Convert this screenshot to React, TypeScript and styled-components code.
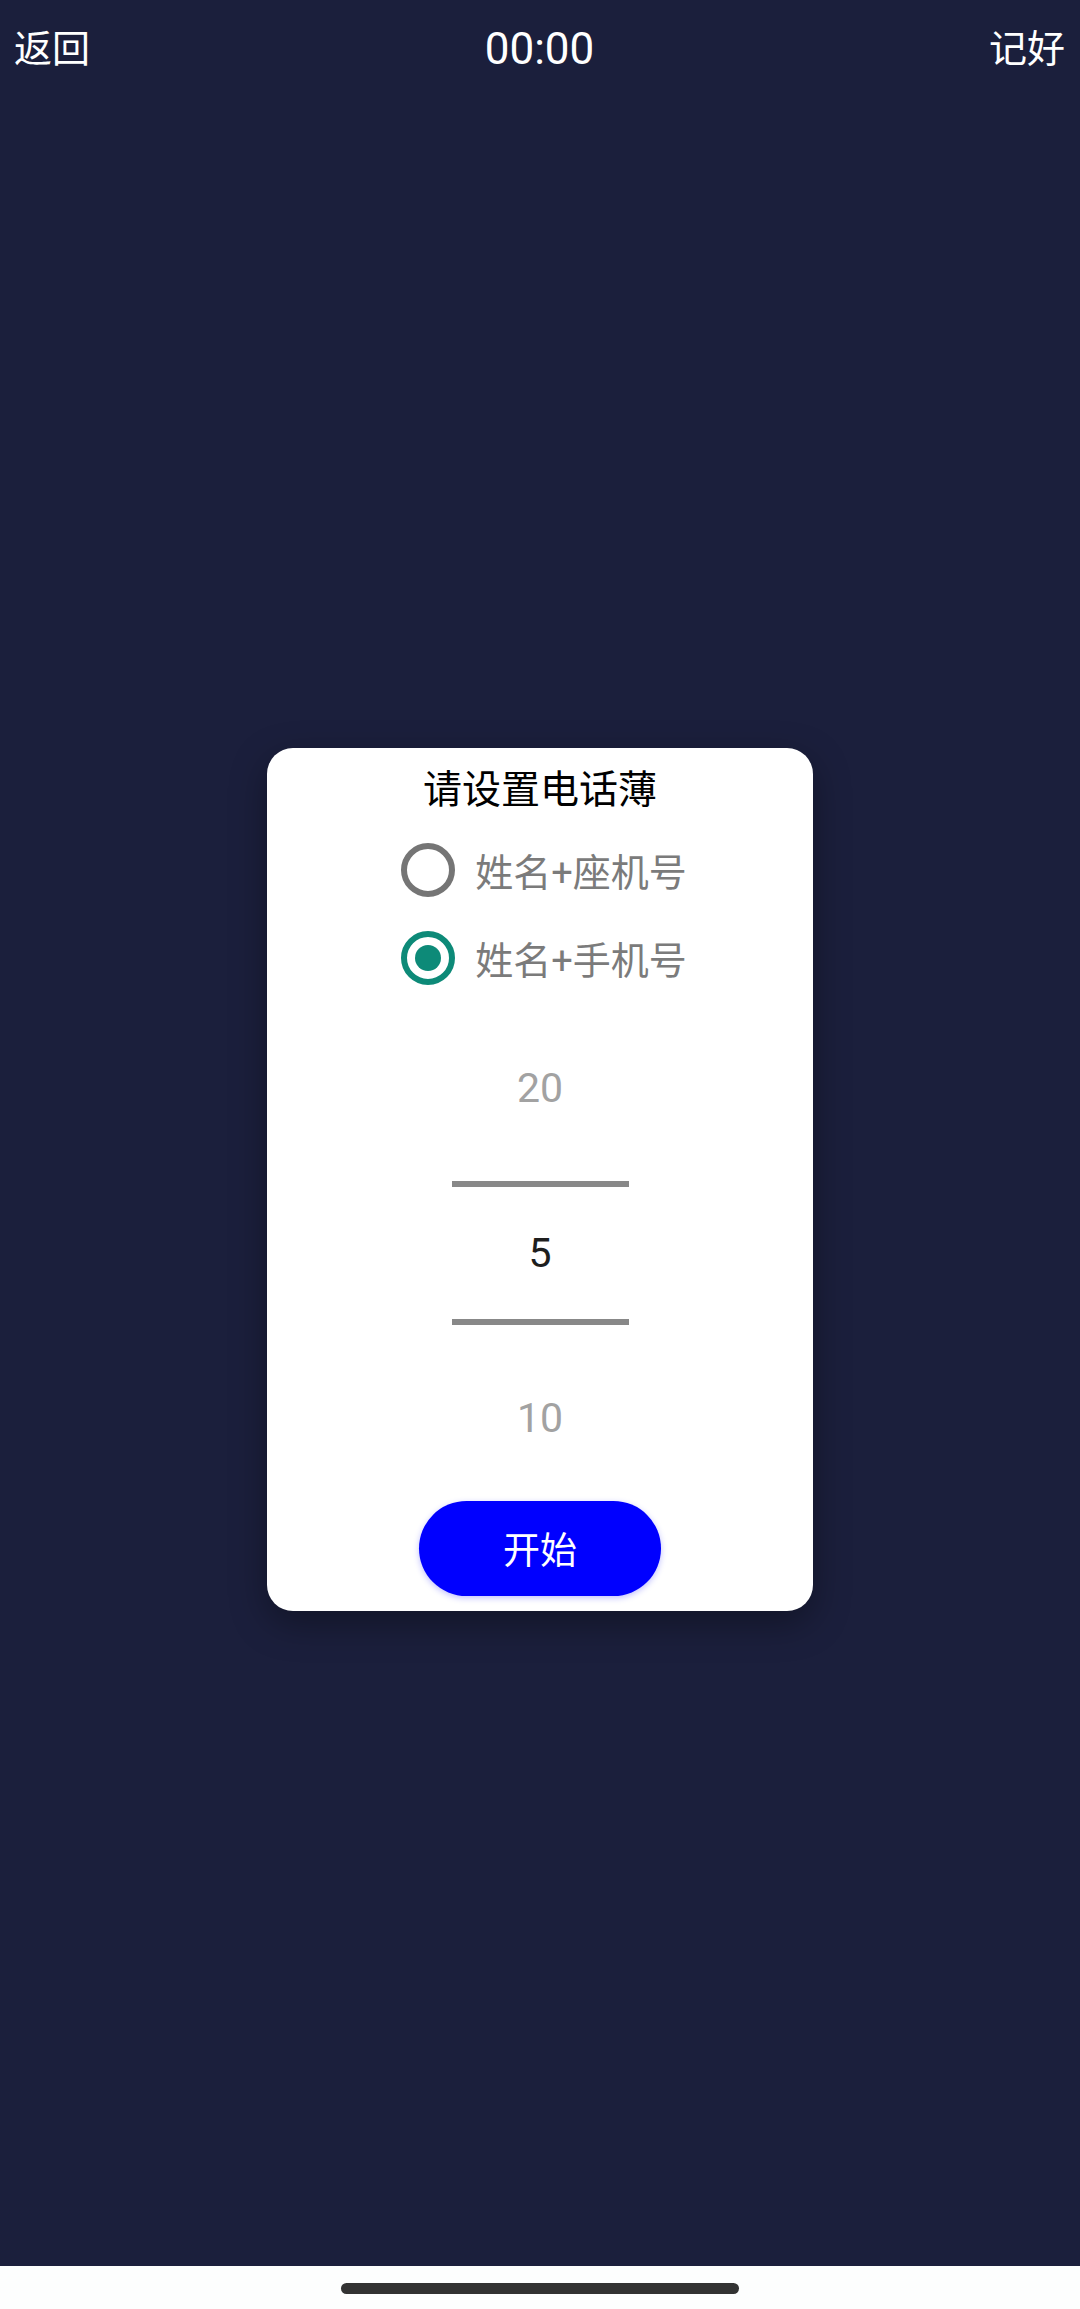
import React, { useState } from "react";
import styled, { createGlobalStyle } from "styled-components";

const GlobalStyle = createGlobalStyle`
  html, body {
    margin: 0;
    padding: 0;
  }
  body {
    font-family: Roboto, "Noto Sans CJK SC", sans-serif;
  }
`;

const Screen = styled.div`
  display: flex;
  flex-direction: column;
  width: 1080px;
  height: 2309px;
  background: #1b1f3c;
`;

const Header = styled.div`
  display: flex;
  align-items: center;
  justify-content: space-between;
  height: 98px;
  padding: 0 15px 0 14px;
  box-sizing: border-box;
  color: #ffffff;
`;

const HeaderText = styled.span`
  font-family: Roboto, "Noto Sans CJK SC", sans-serif;
  font-size: 38px;
  line-height: 1;
`;

const Timer = styled.span`
  font-family: Roboto, sans-serif;
  font-size: 44px;
  line-height: 1;
`;

const Main = styled.div`
  flex: 1;
  display: flex;
  align-items: center;
  justify-content: center;
  padding-bottom: 6px;
`;

const Dialog = styled.div`
  display: flex;
  flex-direction: column;
  align-items: center;
  width: 546px;
  padding: 12px 0 15px;
  box-sizing: border-box;
  background: #ffffff;
  border-radius: 26px;
  box-shadow: 0 12px 36px rgba(0, 0, 0, 0.35);
`;

const Title = styled.div`
  font-family: "Noto Sans CJK SC", sans-serif;
  font-size: 39px;
  line-height: 52px;
  color: #000000;
`;

const RadioGroup = styled.div`
  display: flex;
  flex-direction: column;
  margin: 14px 0 0 8px;
`;

const RadioRow = styled.label`
  display: flex;
  align-items: center;
  gap: 20px;
  height: 88px;
  cursor: pointer;
`;

const RadioCircle = styled.span<{ $checked: boolean }>`
  display: flex;
  align-items: center;
  justify-content: center;
  width: 54px;
  height: 54px;
  box-sizing: border-box;
  border-radius: 50%;
  border: 6px solid ${(p) => (p.$checked ? "#0d8a78" : "#757575")};

  &::after {
    content: "";
    display: ${(p) => (p.$checked ? "block" : "none")};
    width: 26px;
    height: 26px;
    border-radius: 50%;
    background: #0d8a78;
  }
`;

const RadioLabel = styled.span`
  font-family: Roboto, "Noto Sans CJK SC", sans-serif;
  font-size: 38px;
  color: #7b7b7b;
`;

const Picker = styled.div`
  display: flex;
  flex-direction: column;
  align-items: center;
  margin-top: 21px;
`;

const PickerItem = styled.div<{ $selected?: boolean }>`
  display: flex;
  align-items: center;
  justify-content: center;
  width: 177px;
  height: ${(p) => (p.$selected ? "132px" : "130px")};
  font-family: Roboto, sans-serif;
  font-size: 41px;
  color: ${(p) => (p.$selected ? "#1e1e1e" : "#a2a2a2")};
  border-top: ${(p) => (p.$selected ? "6px solid #888888" : "none")};
  border-bottom: ${(p) => (p.$selected ? "6px solid #888888" : "none")};
  margin: ${(p) => (p.$selected ? "28px 0" : "0")};
`;

const StartButton = styled.button`
  width: 242px;
  height: 95px;
  margin-top: 18px;
  border: none;
  border-radius: 48px;
  background: #0000ff;
  color: #ffffff;
  font-family: "Noto Sans CJK SC", sans-serif;
  font-size: 37px;
  box-shadow: 0 2px 6px rgba(0, 0, 255, 0.25);
  cursor: pointer;
`;

const BottomBar = styled.div`
  display: flex;
  justify-content: center;
  height: 43px;
  padding-top: 17px;
  box-sizing: border-box;
  background: #fdfefe;
`;

const HomeIndicator = styled.div`
  width: 398px;
  height: 11px;
  border-radius: 6px;
  background: #333333;
`;

const options = ["姓名+座机号", "姓名+手机号"];

export default function App() {
  const [selected, setSelected] = useState(1);

  return (
    <>
      <GlobalStyle />
      <Screen>
        <Header>
          <HeaderText>返回</HeaderText>
          <Timer>00:00</Timer>
          <HeaderText>记好</HeaderText>
        </Header>
        <Main>
          <Dialog>
            <Title>请设置电话薄</Title>
            <RadioGroup>
              {options.map((opt, i) => (
                <RadioRow key={opt} onClick={() => setSelected(i)}>
                  <RadioCircle $checked={selected === i} />
                  <RadioLabel>{opt}</RadioLabel>
                </RadioRow>
              ))}
            </RadioGroup>
            <Picker>
              <PickerItem>20</PickerItem>
              <PickerItem $selected>5</PickerItem>
              <PickerItem>10</PickerItem>
            </Picker>
            <StartButton>开始</StartButton>
          </Dialog>
        </Main>
        <BottomBar>
          <HomeIndicator />
        </BottomBar>
      </Screen>
    </>
  );
}
